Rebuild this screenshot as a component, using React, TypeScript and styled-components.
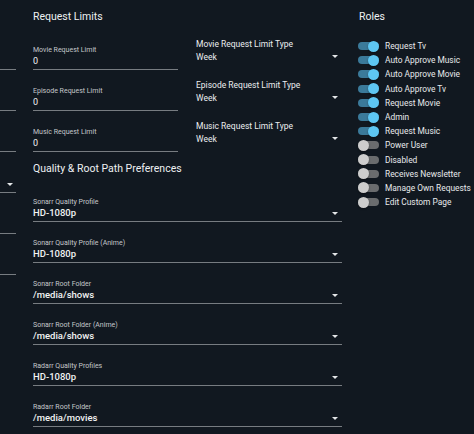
import React from 'react';
import styled, { createGlobalStyle } from 'styled-components';

const Global = createGlobalStyle`
  html, body { margin: 0; padding: 0; background: #111820; }
  body {
    font-family: Roboto, "Noto Sans", "Liberation Sans", sans-serif;
    color: #eceef0;
    width: 474px;
    height: 434px;
    overflow: hidden;
  }
  * { box-sizing: border-box; }
`;

const Page = styled.div`
  display: flex;
  align-items: flex-start;
  height: 434px;
  background: #111820;
  overflow: hidden;
`;

const Side = styled.div`
  width: 16px;
  flex-shrink: 0;
  margin-right: 17px;
  display: flex;
  flex-direction: column;
`;

const Main = styled.div`
  width: 309px;
  flex-shrink: 0;
  margin-right: 16px;
  display: flex;
  flex-direction: column;
`;

const Heading = styled.h2`
  margin: 0;
  height: 29px;
  padding-top: 10px;
  font-size: 10.5px;
  line-height: 14px;
  font-weight: 400;
  color: #eef0f2;
  white-space: nowrap;
`;

const LimitsGrid = styled.div`
  display: grid;
  grid-template-columns: 145px 146px;
  column-gap: 18px;
`;

const Field = styled.div`
  height: 41px;
  display: flex;
  flex-direction: column;
  justify-content: flex-end;
`;

const SmallLabel = styled.div`
  font-size: 7px;
  line-height: 9px;
  margin-bottom: 0.5px;
  color: #c4c7ca;
  white-space: nowrap;
`;

const ValueRow = styled.div<{ $strong?: boolean; $compact?: boolean }>`
  display: flex;
  align-items: center;
  justify-content: space-between;
  height: 15px;
  padding-bottom: 2px;
  padding-right: ${(p) => (p.$compact ? '3px' : '4px')};
  border-bottom: 1px solid #777c81;
  font-size: ${(p) => (p.$strong ? '9.5px' : '9px')};
  font-weight: ${(p) => (p.$strong ? 500 : 400)};
  line-height: 12px;
  color: #f2f3f4;
  white-space: nowrap;
`;

const SelectBlock = styled.div`
  height: 41px;
  padding-top: 9.5px;
  display: flex;
  flex-direction: column;
`;

const SelectLabel = styled.div`
  font-size: 8.5px;
  line-height: 11px;
  margin-bottom: 1px;
  color: #eceef0;
  white-space: nowrap;
`;

const SelectValue = styled.div`
  display: flex;
  align-items: center;
  justify-content: space-between;
  padding-right: 4px;
  font-size: 8.5px;
  line-height: 12px;
  color: #eceef0;
`;

const Roles = styled.div`
  display: flex;
  flex-direction: column;
  padding-left: 1px;
`;

const RoleList = styled.div`
  display: flex;
  flex-direction: column;
  margin-top: 10px;
`;

const RoleRow = styled.div`
  display: flex;
  align-items: center;
  height: 14.2px;
  gap: 6px;
  margin-left: -1px;
`;

const Switch = styled.span`
  position: relative;
  width: 21px;
  height: 11px;
  flex-shrink: 0;
`;

const Track = styled.span<{ $on: boolean }>`
  position: absolute;
  left: 0;
  top: 1.5px;
  width: 21px;
  height: 8px;
  border-radius: 4px;
  background: ${(p) => (p.$on ? '#3b7a9a' : '#6a6c6e')};
`;

const Thumb = styled.span<{ $on: boolean }>`
  position: absolute;
  top: 0;
  left: ${(p) => (p.$on ? '10px' : '0')};
  width: 11px;
  height: 11px;
  border-radius: 50%;
  background: ${(p) => (p.$on ? '#5ec6f2' : '#cdcdcd')};
  box-shadow: 0 1px 2px rgba(0, 0, 0, 0.4);
`;

const RoleText = styled.span`
  font-size: 8.4px;
  line-height: 12px;
  color: #e8eaec;
  white-space: nowrap;
`;

const Arrow = () => (
  <svg width="6" height="3" viewBox="0 0 6 3" style={{ flexShrink: 0 }}>
    <path d="M0 0h6L3 3z" fill="#e4e6e8" />
  </svg>
);

const limits = [
  { label: 'Movie Request Limit', type: 'Movie Request Limit Type' },
  { label: 'Episode Request Limit', type: 'Episode Request Limit Type' },
  { label: 'Music Request Limit', type: 'Music Request Limit Type' },
];

const quality = [
  { label: 'Sonarr Quality Profile', value: 'HD-1080p' },
  { label: 'Sonarr Quality Profile (Anime)', value: 'HD-1080p' },
  { label: 'Sonarr Root Folder', value: '/media/shows' },
  { label: 'Sonarr Root Folder (Anime)', value: '/media/shows' },
  { label: 'Radarr Quality Profiles', value: 'HD-1080p' },
  { label: 'Radarr Root Folder', value: '/media/movies' },
];

const roles: [string, boolean][] = [
  ['Request Tv', true],
  ['Auto Approve Music', true],
  ['Auto Approve Movie', true],
  ['Auto Approve Tv', true],
  ['Request Movie', true],
  ['Admin', true],
  ['Request Music', true],
  ['Power User', false],
  ['Disabled', false],
  ['Receives Newsletter', false],
  ['Manage Own Requests', false],
  ['Edit Custom Page', false],
];

const sideFields = [false, false, false, true, false, false];

export default function App() {
  return (
    <>
      <Global />
      <Page>
        <Side>
          <Heading />
          {sideFields.map((hasArrow, i) => (
            <Field key={i}>
              <ValueRow $compact>
                <span />
                {hasArrow && <Arrow />}
              </ValueRow>
            </Field>
          ))}
        </Side>
        <Main>
          <Heading>Request Limits</Heading>
          {limits.map((l) => (
            <LimitsGrid key={l.label}>
              <Field>
                <SmallLabel>{l.label}</SmallLabel>
                <ValueRow>0</ValueRow>
              </Field>
              <SelectBlock>
                <SelectLabel>{l.type}</SelectLabel>
                <SelectValue>
                  <span>Week</span>
                  <Arrow />
                </SelectValue>
              </SelectBlock>
            </LimitsGrid>
          ))}
          <Heading>Quality &amp; Root Path Preferences</Heading>
          {quality.map((q) => (
            <Field key={q.label}>
              <SmallLabel>{q.label}</SmallLabel>
              <ValueRow $strong>
                <span>{q.value}</span>
                <Arrow />
              </ValueRow>
            </Field>
          ))}
        </Main>
        <Roles>
          <Heading>Roles</Heading>
          <RoleList>
            {roles.map(([name, on]) => (
              <RoleRow key={name}>
                <Switch>
                  <Track $on={on} />
                  <Thumb $on={on} />
                </Switch>
                <RoleText>{name}</RoleText>
              </RoleRow>
            ))}
          </RoleList>
        </Roles>
      </Page>
    </>
  );
}
